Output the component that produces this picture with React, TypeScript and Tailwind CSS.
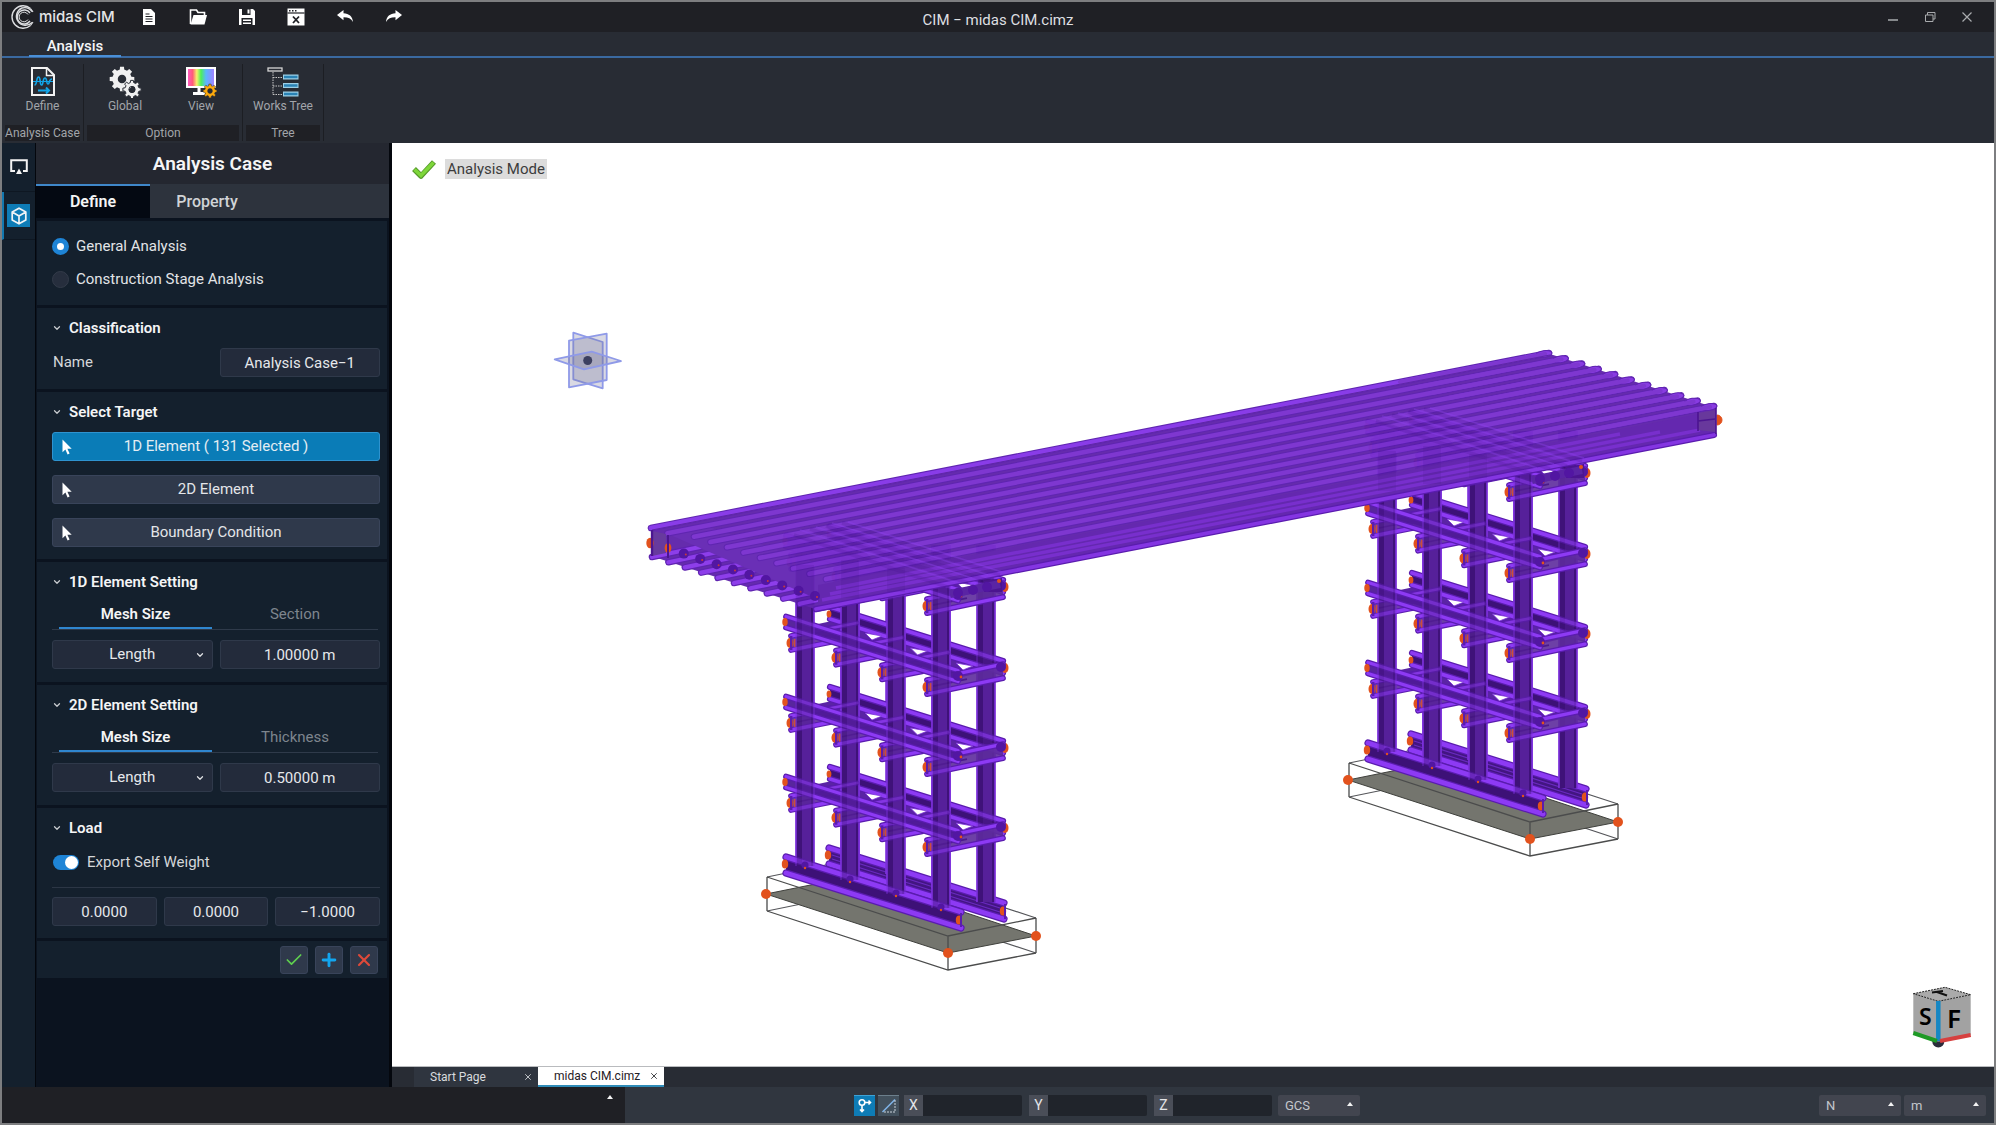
import React, { useState } from "react";
import { ChevronDown, Check, Plus, X } from "lucide-react";

type Pt = [number, number];
const pts = (list: Pt[]) => list.map((p) => p.join(",")).join(" ");

/* ---------- 3D model ---------- */

function Flange({ a, b, w = 5, bright = "#8d3af4" }: { a: Pt; b: Pt; w?: number; bright?: string }) {
  return (
    <g strokeLinecap="round">
      <line x1={a[0]} y1={a[1]} x2={b[0]} y2={b[1]} stroke="#5a1cae" strokeWidth={w + 1.2} />
      <line x1={a[0]} y1={a[1]} x2={b[0]} y2={b[1]} stroke={bright} strokeWidth={w - 1.2} />
    </g>
  );
}

function Beam({ a, b, h, web = "#431582", opacity = 1, w = 4.6 }: { a: Pt; b: Pt; h: number; web?: string; opacity?: number; w?: number }) {
  const t = h / 2;
  return (
    <g>
      <polygon
        points={pts([[a[0], a[1] - t], [b[0], b[1] - t], [b[0], b[1] + t], [a[0], a[1] + t]])}
        fill={web}
        opacity={opacity}
      />
      <Flange a={[a[0], a[1] + t]} b={[b[0], b[1] + t]} w={w} />
      <Flange a={[a[0], a[1] - t]} b={[b[0], b[1] - t]} w={w} />
    </g>
  );
}

function Column({ x, top, bottom, opacity = 1 }: { x: number; top: number; bottom: number; opacity?: number }) {
  return (
    <g opacity={opacity}>
      <rect x={x - 9} y={top} width={18} height={bottom - top} fill="#3f1279" />
      <rect x={x - 3} y={top} width={9} height={bottom - top} fill="#56209a" />
      <path d={`M${x - 9} ${top}V${bottom}M${x + 9} ${top}V${bottom}`} stroke="#7d31dc" strokeWidth={1.6} />
    </g>
  );
}

function Node({ x, y, r = 4 }: { x: number; y: number; r?: number }) {
  return <ellipse cx={x} cy={y} rx={r * 0.8} ry={r + 0.6} fill="#e2521d" />;
}

function BoltedEnd({ x, y, h }: { x: number; y: number; h: number }) {
  return (
    <g>
      <Node x={x - 1} y={y} r={4.4} />
      <rect x={x - 1} y={y - h / 2} width={2.4} height={h} fill="#5a1cae" />
      <rect x={x + 3} y={y - 4} width={1.6} height={8} fill="#e2521d" opacity={0.8} />
    </g>
  );
}

const FRONT_X = [805, 850, 896, 941];
const TIERS = [541, 622, 702, 782];

function Slab() {
  return (
    <g>
      <g stroke="#55565a" strokeWidth={1.2} fill="none">
        <path d="M767 877 855 859 1036 918M767 911 855 893 1036 953" />
      </g>
      <polygon points="766,894 855,876 1036,936 948,953" fill="#74756e" stroke="#3f403c" strokeWidth={1} />
      <g stroke="#4b4c4c" strokeWidth={1.3} fill="none">
        <path d="M767 877 948 936 1036 918M767 911 948 970 1036 953M767 877V911M948 936V970M1036 918V953" />
      </g>
      <circle cx={766} cy={894} r={5} fill="#e2521d" />
      <circle cx={948} cy={953} r={5} fill="#e2521d" />
      <circle cx={1036} cy={936} r={5} fill="#e2521d" />
    </g>
  );
}

function Tower() {
  return (
    <g>
      <Slab />
      <Beam a={[829, 856]} b={[1004, 911]} h={16} w={6} />
      <path d="M832 855 1000 908M832 859 1000 912" stroke="#6a2ac0" strokeWidth={1.2} />
      <Node x={828} y={855} />
      {FRONT_X.map((x, i) => (
        <Column key={x} x={x + 45} top={545} bottom={860 + i * 14} />
      ))}
      {TIERS.map((y) => (
        <g key={y}>
          <polygon
            points={pts([[846, y - 4], [1000, y + 46], [958, y + 56], [800, y + 6], [818, y + 2]])}
            fill="#5a24a4"
          />
          <Beam a={[830, y - 9]} b={[1003, y + 45]} h={12} web="#3d1177" w={5} />
          <Node x={829} y={y - 8} r={3} />
          <Node x={1005} y={y + 46} r={4.4} />
        </g>
      ))}
      <Column x={986} top={545} bottom={902} opacity={0.4} />
      {FRONT_X.map((x, i) => (
        <Column key={x} x={x} top={545} bottom={866 + i * 14} />
      ))}
      {TIERS.map((y) => (
        <g key={y}>
          {FRONT_X.map((x, i) => (
            <g key={x}>
              <Beam a={[x - 14, y + 21 + i * 14.7]} b={[x + (i === 3 ? 62 : 26), y + (i === 3 ? 5 : 13) + i * 14.7]} h={14} web="#5d2b9c" opacity={0.9} />
              <path d={`M${x - 8} ${y + 20 + i * 14.7}l34 -7`} stroke="#4c1a8c" strokeWidth={1.6} />
              <BoltedEnd x={x - 14} y={y + 21 + i * 14.7} h={14} />
            </g>
          ))}
          {FRONT_X.slice(0, 3).map((x, i) => (
            <Flange key={x} a={[x + 6, y + 10 + i * 14.7]} b={[x + 52, y + 1 + i * 14.7]} w={4} bright="#8435e2" />
          ))}
          <Beam a={[786, y]} b={[958, y + 54]} h={11} web="#4f1a98" opacity={0.95} />
          {[0, 1, 2].map((i) => (
            <path
              key={i}
              d={`M${865 + i * 45.5} ${y + 11 + i * 15}l17 3 -10 4z`}
              fill="#ffffff"
              stroke="#7d31dc"
              strokeWidth={0.8}
            />
          ))}
          <Node x={785} y={y} r={3.4} />
          <circle cx={958} cy={y + 54} r={5} fill="#5216a2" />
          <circle cx={961} cy={y + 55} r={1.4} fill="#e2521d" />
          <circle cx={1001} cy={y + 45} r={5} fill="#5216a2" />
        </g>
      ))}
      <Beam a={[786, 865]} b={[961, 920]} h={16} web="#3d1177" w={6} />
      <Node x={785} y={864} />
      <Node x={959} y={920} />
      <Node x={1003} y={911} />
      <path d="M961 913V927M1005 904V919" stroke="#5a1cae" strokeWidth={2} />
      {FRONT_X.map((x, i) => (
        <g key={x}>
          <Column x={x} top={545} bottom={866 + i * 14} opacity={0.45} />
          <circle cx={x} cy={865 + i * 14} r={3.5} fill="#5216a2" />
          <circle cx={x} cy={868 + i * 14} r={1.2} fill="#e2521d" />
        </g>
      ))}
    </g>
  );
}

function Deck() {
  const rows = Array.from({ length: 11 }, (_, i) => i);
  return (
    <g>
      <g opacity={0.97}>
        <polygon points="651,529 1550,354 1716,408 1716,434 815,609 651,556" fill="#6126ab" />
        {rows.map((i) => {
          const dx = i * 16.4;
          const dy = i * 5.2;
          return (
            <Flange key={i} a={[652 + dx, 557 + dy]} b={[700 + dx, 547 + dy]} w={5.4} bright="#8a38ea" />
          );
        })}
        <polygon points="668,534 700,524 850,574 815,598" fill="#6629b4" />
        {rows.map((i) => {
          const dx = i * 16.5;
          const dy = i * 5.3;
          const inset = i > 1 ? 10 : 0;
          const first = i === 0;
          return (
            <g key={i} strokeLinecap="round">
              <line x1={651 + dx + inset} y1={528 + dy - inset * 0.194} x2={1549 + dx} y2={353 + dy} stroke="#5a1fae" strokeWidth={6.6} />
              <line x1={651 + dx + inset} y1={528 + dy - inset * 0.194} x2={1549 + dx} y2={353 + dy} stroke={first ? "#8636e8" : "#7a31cf"} strokeWidth={4.6} />
              <ellipse cx={1544 + dx} cy={354 + dy} rx={8} ry={3.4} fill="#8636e2" stroke="#5a1cae" strokeWidth={1} transform={`rotate(-8 ${1544 + dx} ${354 + dy})`} />
              <line x1={1400 + dx} y1={382 + dy} x2={1545 + dx} y2={354 + dy} stroke="#7a31cf" strokeWidth={4.2} />
            </g>
          );
        })}
        <line x1={652} y1={530} x2={1550} y2={355} stroke="#5a20a4" strokeWidth={1} />
      </g>
      <polygon points="818,585 1714,411 1714,432 818,606" fill="#6428af" />
      <path d="M836 588 1620 434M830 594 1660 432M822 600 1700 430" stroke="#782fcd" strokeWidth={3.4} />
      <path d="M1717 415a5 5 0 0 1 0 10z" fill="#e2521d" stroke="#e2521d" />
      <Flange a={[816, 609]} b={[1714, 435]} w={5} bright="#8435e2" />
      <polygon points="1698,413 1715,410 1715,432 1698,430" fill="#68389c" />
      <path d="M1698 412V431M1716 408V434M1698 421 1715 419" stroke="#4c1590" strokeWidth={1.6} fill="none" />

      <polygon points="652,531 666,534 666,553 652,556" fill="#673a9e" />
      <Node x={650} y={543} r={4.6} />
      <path d="M652 530V556" stroke="#4c1590" strokeWidth={2.4} />
      <Node x={668} y={548} r={4.2} />
      <path d="M668 535V558" stroke="#4c1590" strokeWidth={2} />
      {rows.slice(2).map((i) => (
        <g key={i}>
          <circle cx={651 + i * 16.4} cy={543 + i * 5.3} r={5} fill="#5216a2" />
          <circle cx={653 + i * 16.4} cy={544 + i * 5.3} r={1} fill="#c83a3a" />
        </g>
      ))}
      {[0, 582].map((dx) => (
        <g key={dx} transform={`translate(${dx} ${dx ? -114 : 0})`}>
          <g stroke="#45148a" strokeWidth={3.6} opacity={0.2} fill="none">
            <path d="M794 535 950 588M810 529 968 583M826 526 985 580M842 523 1000 575" />
          </g>
          <g stroke="#8c42ee" strokeWidth={1.6} opacity={0.35} fill="none">
            <path d="M800 530 955 582M816 527 972 578M832 523 988 575M848 522 1002 572" />
          </g>
          <g fill="#45148a" opacity={0.14}>
            <rect x={796} y={565} width={18} height={40} />
            <rect x={841} y={560} width={18} height={38} />
            <rect x={887} y={568} width={18} height={24} />
          </g>
          <path d="M984 581 1002 578V592H984Z" fill="#4c1590" />
          <path d="M950 594 1000 584" stroke="#5a24a4" strokeWidth={8} />
          <circle cx={958} cy={593} r={5} fill="#5216a2" />
          <circle cx={973} cy={590} r={5} fill="#5216a2" />
          <circle cx={987} cy={587} r={5} fill="#5216a2" />
          <circle cx={999} cy={581} r={2} fill="#e2521d" />
        </g>
      ))}
    </g>
  );
}

function Gizmo() {
  return (
    <g fill="#6b6b92" fillOpacity={0.26} stroke="#8f9ae8" strokeWidth={1.8} strokeLinejoin="round">
      <polygon points="573.3,332.700 602.700,342 602.700,388.300 573.300,379.300" />
      <polygon points="569,340.700 606.700,333.700 606.700,380 569,387.300" />
      <polygon points="554.700,359.300 591.700,351.700 621,361 584,369.300" />
      <circle cx={587.7} cy={360.5} r={4.5} fill="#3d4060" fillOpacity={1} stroke="none" />
    </g>
  );
}

function ViewCube() {
  return (
    <svg viewBox="1910 984 66 66" className="h-full w-full" aria-label="View cube">
      <circle cx={1938.3} cy={1041.5} r={6} fill="#2b2d3c" />
      <polygon points="1913.300,993.700 1938.300,1001.300 1938.300,1041.700 1913.300,1033.300" fill="#a4a4a4" />
      <polygon points="1938.300,1001.300 1970.700,994.700 1970.700,1035 1938.300,1041.700" fill="#a2a2a2" />
      <polygon points="1913.300,993.700 1945,987.300 1970.700,994.700 1938.300,1001.300" fill="#aaaaaa" stroke="#222" strokeWidth={1} strokeDasharray="2 1" />
      <path d="M1938.300 1001V1041" stroke="#1587c4" strokeWidth={4.5} />
      <path d="M1913.300 1033 1937 1041" stroke="#1e9a26" strokeWidth={4} />
      <path d="M1940 1041 1970.700 1035" stroke="#d6403f" strokeWidth={4} />
      <text x={1919} y={1025} fontSize={23} fontWeight={600} fontFamily="Noto Sans, sans-serif">S</text>
      <text x={1947} y={1028} fontSize={26} fontWeight={600} fontFamily="Noto Sans, sans-serif">F</text>
      <path d="M1932 992.500 1943 991M1937 992 1947 995.500" stroke="#111" strokeWidth={2} />
    </svg>
  );
}

/* ---------- icons ---------- */

const gearPath = (cx: number, cy: number, r: number, teeth: number) => {
  const out: string[] = [];
  const step = (Math.PI * 2) / teeth;
  for (let i = 0; i < teeth; i++) {
    const a = i * step;
    const parts: Array<[number, number]> = [
      [-0.3, 0.77],
      [-0.2, 1],
      [0.2, 1],
      [0.3, 0.77],
    ];
    parts.forEach(([o, k]) => {
      const t = a + o * step;
      out.push(`${(cx + Math.cos(t) * r * k).toFixed(1)} ${(cy + Math.sin(t) * r * k).toFixed(1)}`);
    });
  }
  const h = r * 0.34;
  return `M${out.join("L")}Z M${cx - h} ${cy}a${h} ${h} 0 1 0 ${h * 2} 0a${h} ${h} 0 1 0 ${-h * 2} 0Z`;
};

const LogoIcon = () => (
  <svg viewBox="0 0 24 24" className="size-6" fill="none" stroke="#dcdde0">
    <path d="M20.500 3.500A11.200 11.200 0 1 0 20.500 20.500" strokeWidth="1.400" />
    <path d="M22 6.500A9.600 9.600 0 0 0 12 3 9 9 0 1 0 22 17.500" strokeWidth="1.400" />
    <path d="M20 8A7 7 0 1 0 20 16" strokeWidth="1.400" />
    <path d="M18 9.500A4.800 4.800 0 1 0 18 14.500" strokeWidth="1" />
    <path d="M20.500 3.500 23 7M20.500 20.500 23 17" strokeWidth="1.200" />
  </svg>
);

const FileIcon = () => (
  <svg viewBox="0 0 18 18" className="size-[18px]">
    <path d="M3 1h8l4 4v12H3z" fill="#fff" />
    <path d="M5.500 6h4M5.500 8.500h7M5.500 11h7M5.500 13.500h7" stroke="#1f2025" strokeWidth="1.200" />
  </svg>
);
const FolderIcon = () => (
  <svg viewBox="0 0 18 18" className="size-[18px]">
    <path d="M1.500 16V2h6l1.500 2.500h6.500V7" fill="none" stroke="#fff" strokeWidth="1.600" />
    <path d="M1.500 16.500 4.500 7H18l-2.500 9.500z" fill="#fff" />
  </svg>
);
const SaveIcon = () => (
  <svg viewBox="0 0 18 18" className="size-[18px]">
    <path d="M1 1h14l2 2v14H1z" fill="#fff" />
    <path d="M4 1h8.500v6H4zM3.500 10h11v7h-11z" fill="#1f2025" />
    <path d="M9.500 1.500h2v4h-2zM5 11.500h8v1.400H5zM5 14.500h8v1.400H5z" fill="#fff" />
  </svg>
);
const WindowCloseIcon = () => (
  <svg viewBox="0 0 18 18" className="size-[18px]">
    <path d="M.5.500h17v17H.5z" fill="#fff" />
    <path d="M.5 5h17" stroke="#1f2025" strokeWidth="1.200" />
    <path d="M2 2.700h1.500M5 2.700h1.500M8 2.700h1.500" stroke="#1f2025" strokeWidth="1.400" />
    <path d="M6 8.500l6 6.500M12 8.500 6 15" stroke="#1f2025" strokeWidth="1.800" />
  </svg>
);
const UndoIcon = ({ flip = false }: { flip?: boolean }) => (
  <svg viewBox="0 0 18 18" className={flip ? "size-[18px] -scale-x-100" : "size-[18px]"}>
    <path d="M1 7 7.500 2v3.300C13 5.500 16.500 8.500 17 14c-2-3.500-5-4.800-9.500-4.700v3z" fill="#fff" />
  </svg>
);

const DefineIcon = () => (
  <svg viewBox="0 0 30 32" className="h-8 w-[30px]" fill="none">
    <path d="M4 2h15l7 7v20H4z" stroke="#f3f3f3" strokeWidth="2" />
    <path d="M18.500 2v7.500H26" stroke="#f3f3f3" strokeWidth="1.500" />
    <path d="M6.500 19c3 0 1.500-8 4-8s1 8 3 8 1-7 3.500-7 1 6 3 6 .5-5 4-5" stroke="#12a5e8" strokeWidth="1.600" />
    <path d="M5 15.500h20" stroke="#12a5e8" strokeWidth="1" />
    <path d="M10 24.500h11M18 21.500l3 3-3 3" stroke="#12a5e8" strokeWidth="2" />
  </svg>
);
const GlobalIcon = () => (
  <svg viewBox="0 0 34 32" className="h-8 w-[34px]" fill="#f0f0f0" fillRule="evenodd">
    <path d={gearPath(14, 13, 12.5, 8)} />
    <path d={gearPath(24, 23.5, 9.2, 8)} stroke="#282c34" strokeWidth="1" />
  </svg>
);
const ViewIcon = () => (
  <svg viewBox="0 0 34 32" className="h-8 w-[34px]">
    <defs>
      <linearGradient id="spectrum">
        <stop offset="0" stopColor="#ff5bd0" />
        <stop offset=".2" stopColor="#ff5a78" />
        <stop offset=".35" stopColor="#f6f06a" />
        <stop offset=".5" stopColor="#4bf05a" />
        <stop offset=".68" stopColor="#5bb6ff" />
        <stop offset="1" stopColor="#a87bff" />
      </linearGradient>
    </defs>
    <rect x="3" y="2" width="28" height="19" fill="url(#spectrum)" stroke="#fff" strokeWidth="2" />
    <path d="M15 21v6M9 27.500h12" stroke="#fff" strokeWidth="3" />
    <path d={gearPath(26, 25, 7, 8)} fill="#ffab0c" fillRule="evenodd" stroke="#282c34" strokeWidth=".6" />
  </svg>
);
const TreeIcon = () => (
  <svg viewBox="0 0 34 32" className="h-8 w-[34px]" fill="none">
    <rect x="2" y="2" width="14" height="3" stroke="#d5d5d5" strokeWidth="1.300" />
    <path d="M7 6v23M7 11.500h10M7 20h10M7 28.500h10" stroke="#c5c5c5" strokeDasharray="1.500 1" />
    <path d="M17 11h15.500M17 19.500h15.500M17 28h15.500" stroke="#9ccfe6" strokeWidth="5" />
    <path d="M18 11h13.500M18 19.500h13.500M18 28h13.500" stroke="#2a83b5" strokeWidth="2.600" />
  </svg>
);
const CursorIcon = () => (
  <svg viewBox="0 0 10 16" className="h-4 w-[10px]">
    <path d="M.5.500v12.700L3.400 10.500l2.200 5 2-.9-2.200-4.800H9.700z" fill="#fff" />
  </svg>
);
const GreenCheck = () => (
  <svg viewBox="0 0 26 20" className="h-5 w-[26px]">
    <path d="M3 10l7 7L23 3" fill="none" stroke="#55982a" strokeWidth="5.500" strokeLinejoin="round" />
    <path d="M3.500 10.500l6.500 6L22.500 3.500" fill="none" stroke="#7ed63a" strokeWidth="3.400" />
  </svg>
);
const UpTriangle = () => (
  <svg viewBox="0 0 6 4" className="h-1 w-1.5">
    <path d="M0 4 3 0l3 4z" fill="#f3f3f3" />
  </svg>
);

/* ---------- panel controls ---------- */

const FIELD =
  "h-[29px] w-full min-w-0 rounded-[3px] border border-[#2f394a] bg-[#232b3b] text-center text-[15px] text-[#e6e8eb] outline-none";

function Section({ title, children }: { title: string; children: React.ReactNode }) {
  return (
    <section className="bg-[#14202d] pr-[7px] pb-3 pl-[15px]">
      <h2 className="flex h-10 items-center">
        <button type="button" className="flex items-center gap-[7px] text-[15px] font-semibold text-[#f4f5f6]">
          <ChevronDown className="size-2.5 text-[#c9ccd0]" strokeWidth={3} />
          {title}
        </button>
      </h2>
      {children}
    </section>
  );
}

function TargetButton({ label, active = false }: { label: string; active?: boolean }) {
  return (
    <button
      type="button"
      className={
        active
          ? "flex h-[29px] items-center rounded-[3px] border border-[#2f93cf] bg-[#0a7cb7] pr-[19px] pl-[9px] text-[15px] text-[#e3edf3]"
          : "flex h-[29px] items-center rounded-[3px] border border-[#39445a] bg-[#2f394b] pr-[19px] pl-[9px] text-[15px] text-[#e3e5e8]"
      }
    >
      <CursorIcon />
      <span className="flex-1">{label}</span>
    </button>
  );
}

function ElementSetting({ title, second, value }: { title: string; second: string; value: string }) {
  return (
    <Section title={title}>
      <div role="tablist" className="mr-0.5 flex h-7 border-b border-[#2f3a4a] pl-[7px] text-[15px]">
        <button type="button" role="tab" aria-selected="true" className="w-[153px] border-b-2 border-[#2f86cf] font-semibold text-[#f4f5f6]">
          Mesh Size
        </button>
        <button type="button" role="tab" aria-selected="false" className="flex-1 pb-0.5 text-[#7e858d]">
          {second}
        </button>
      </div>
      <div className="mt-2.5 grid grid-cols-2 gap-[7px] pb-px">
        <div className="relative">
          <select aria-label={title + " type"} className={FIELD + " appearance-none [text-align-last:center]"}>
            <option>Length</option>
          </select>
          <ChevronDown className="pointer-events-none absolute top-2.5 right-2 size-2.5 text-[#dfe1e4]" strokeWidth={3} />
        </div>
        <input aria-label={title + " value"} defaultValue={value} className={FIELD} />
      </div>
    </Section>
  );
}

function RadioRow({ label, checked, onPick }: { label: string; checked: boolean; onPick: () => void }) {
  return (
    <label className="flex h-[33px] items-center gap-[7px] text-[15px] text-[#e2e4e7]">
      <input
        type="radio"
        name="analysis-type"
        checked={checked}
        onChange={onPick}
        className="size-[17px] appearance-none rounded-full border border-[#333b49] bg-[#262e3d] checked:border-[5px] checked:border-[#1e84d6] checked:bg-white"
      />
      {label}
    </label>
  );
}

function AnalysisPanel() {
  const [kind, setKind] = useState(0);
  return (
    <aside className="flex w-[357px] shrink-0 flex-col border-r-[3px] border-l border-[#04070d] bg-[#0b131f]">
      <h1 className="flex h-[41px] items-center justify-center pt-0.5 bg-[#242730] text-[19px] font-semibold text-[#f4f5f6]">Analysis Case</h1>
      <div role="tablist" className="flex h-[34px] bg-[#2d333d] text-[16px] font-semibold">
        <button type="button" role="tab" aria-selected="true" className="w-[114px] border-t-2 border-[#3f87c9] bg-[#040912] text-[#f4f5f6]">
          Define
        </button>
        <button type="button" role="tab" aria-selected="false" className="w-[114px] pt-0.5 font-medium text-[#d0d3d6]">
          Property
        </button>
      </div>
      <div className="mt-[3px] mr-0.5 ml-px flex flex-col gap-[3px]">
        <section className="bg-[#14202d] pt-[9px] pr-[7px] pb-[9px] pl-[15px]">
          <RadioRow label="General Analysis" checked={kind === 0} onPick={() => setKind(0)} />
          <RadioRow label="Construction Stage Analysis" checked={kind === 1} onPick={() => setKind(1)} />
        </section>
        <Section title="Classification">
          <label className="grid grid-cols-2 items-center gap-[7px] text-[15px] text-[#d4d7da]">
            <span className="pl-px">Name</span>
            <input defaultValue="Analysis Case−1" className={FIELD} />
          </label>
        </Section>
        <Section title="Select Target">
          <div className="flex flex-col gap-3.5">
            <TargetButton label="1D Element ( 131 Selected )" active />
            <TargetButton label="2D Element" />
            <TargetButton label="Boundary Condition" />
          </div>
        </Section>
        <ElementSetting title="1D Element Setting" second="Section" value="1.00000 m" />
        <ElementSetting title="2D Element Setting" second="Thickness" value="0.50000 m" />
        <Section title="Load">
          <label className="flex h-7 items-center gap-2 pl-px text-[15px] text-[#d4d7da]">
            <input
              type="checkbox"
              role="switch"
              defaultChecked
              className="flex h-[15px] w-[26px] appearance-none items-center rounded-full bg-[#333b49] px-px before:size-[13px] before:rounded-full before:bg-white checked:justify-end checked:bg-[#1e84d6]"
            />
            Export Self Weight
          </label>
          <div className="mt-[11px] grid grid-cols-3 gap-[7px] border-t border-[#2c3645] pt-[9px]">
            <input aria-label="Self weight X" defaultValue="0.0000" className={FIELD} />
            <input aria-label="Self weight Y" defaultValue="0.0000" className={FIELD} />
            <input aria-label="Self weight Z" defaultValue="−1.0000" className={FIELD} />
          </div>
        </Section>
        <div className="flex h-[37px] items-center justify-end gap-[7px] bg-[#14202d] pr-[9px]">
          <button type="button" aria-label="Apply" className="grid size-7 place-items-center rounded-[3px] border border-[#39445a] bg-[#2f394b]">
            <Check className="size-5 text-[#5fd04f]" />
          </button>
          <button type="button" aria-label="Add" className="grid size-7 place-items-center rounded-[3px] border border-[#39445a] bg-[#2f394b]">
            <Plus className="size-5 text-[#13a5ee]" strokeWidth={3.5} />
          </button>
          <button type="button" aria-label="Cancel" className="grid size-7 place-items-center rounded-[3px] border border-[#39445a] bg-[#2f394b]">
            <X className="size-5 text-[#e0493a]" strokeWidth={2.5} />
          </button>
        </div>
      </div>
    </aside>
  );
}

/* ---------- chrome ---------- */

function TitleBar() {
  const tools: Array<[string, React.ReactNode]> = [
    ["New", <FileIcon />],
    ["Open", <FolderIcon />],
    ["Save", <SaveIcon />],
    ["Close file", <WindowCloseIcon />],
    ["Undo", <UndoIcon />],
    ["Redo", <UndoIcon flip />],
  ];
  return (
    <header className="grid h-[30px] shrink-0 grid-cols-[1fr_auto_1fr] items-center bg-[#1f2025]">
      <div className="flex items-center pl-2">
        <LogoIcon />
        <span className="ml-[5px] w-[83px] font-[Inter] text-[15px] font-medium text-[#e4e5e7]">midas CIM</span>
        <div className="ml-0.5 flex">
          {tools.map(([name, icon]) => (
            <button key={name} type="button" aria-label={name} className="grid w-[49px] place-items-center">
              {icon}
            </button>
          ))}
        </div>
      </div>
      <div className="pt-1.5 text-[15px] text-[#dedfe1]">CIM − midas CIM.cimz</div>
      <div className="flex justify-end pr-[9px] text-[#a9abae]">
        <button type="button" aria-label="Minimize" className="grid w-[37px] place-items-center">
          <svg viewBox="0 0 12 12" className="size-3"><path d="M1 9h10" stroke="currentColor" strokeWidth="1.500" /></svg>
        </button>
        <button type="button" aria-label="Restore" className="grid w-[37px] place-items-center">
          <svg viewBox="0 0 12 12" className="size-3" fill="none" stroke="currentColor"><path d="M1.500 4h7.500v6.500H1.500zM3.500 4V1.500h7.500V8H9" /></svg>
        </button>
        <button type="button" aria-label="Close" className="grid w-[37px] place-items-center">
          <svg viewBox="0 0 12 12" className="size-3" fill="none" stroke="currentColor" strokeWidth="1.200"><path d="M1.500 1.500l9 9M10.500 1.500l-9 9" /></svg>
        </button>
      </div>
    </header>
  );
}

function RibbonGroup({ label, width, children }: { label: string; width: string; children: React.ReactNode }) {
  return (
    <div className={"flex flex-col justify-between border-r border-[#1c1e23] px-[3px] " + width}>
      <div className="flex justify-around pt-0.5">{children}</div>
      <div className="h-4 bg-[#1f2025] text-center text-[12px] leading-4 whitespace-nowrap text-[#a2a5aa]">{label}</div>
    </div>
  );
}

function RibbonButton({ label, children }: { label: string; children: React.ReactNode }) {
  return (
    <button type="button" className="flex w-[74px] flex-col items-center text-[12px] leading-4 text-[#a2a5aa]">
      {children}
      {label}
    </button>
  );
}

function StatusSelect({ label, value, options }: { label: string; value: string; options: string[] }) {
  return (
    <div className="relative">
      <select
        aria-label={label}
        defaultValue={value}
        className="h-[21px] w-[82px] appearance-none rounded-[2px] bg-[#42454f] pl-[7px] text-[13px] text-[#c4c7cc] outline-none"
      >
        {options.map((o) => (
          <option key={o}>{o}</option>
        ))}
      </select>
      <span className="pointer-events-none absolute top-[9px] right-[7px] flex">
        <UpTriangle />
      </span>
    </div>
  );
}

export default function App() {
  return (
    <div className="flex h-screen flex-col border-2 border-[#7d7e80] bg-[#282c34] font-[Roboto,sans-serif]">
      <TitleBar />

      <nav className="flex h-[26px] shrink-0 border-b-2 border-[#3a69a0] pl-[27px]">
        <button type="button" className="h-[25px] w-[92px] border-b-2 border-[#4a8fd6] pt-1 text-[15px] leading-[18px] font-medium text-[#f4f5f6]">
          Analysis
        </button>
      </nav>

      <div className="flex h-[85px] shrink-0 pt-1.5 pb-0.5">
        <RibbonGroup label="Analysis Case" width="w-[82px]">
          <RibbonButton label="Define"><DefineIcon /></RibbonButton>
        </RibbonGroup>
        <RibbonGroup label="Option" width="w-[159px]">
          <RibbonButton label="Global"><GlobalIcon /></RibbonButton>
          <RibbonButton label="View"><ViewIcon /></RibbonButton>
        </RibbonGroup>
        <RibbonGroup label="Tree" width="w-[81px]">
          <RibbonButton label="Works Tree"><TreeIcon /></RibbonButton>
        </RibbonGroup>
      </div>

      <div className="flex min-h-0 flex-1">
        <div className="flex w-[33px] shrink-0 flex-col bg-[#14202d]">
          <button type="button" aria-label="Display" className="grid h-[49px] place-items-center border-b border-[#0e1722]">
            <svg viewBox="0 0 18 16" className="h-4 w-[18px]" fill="none">
              <path d="M5 12H1.200V1.200h15.600V12H13" stroke="#f3f3f3" strokeWidth="2" />
              <path d="M9 9.500 12 15H6z" fill="#f3f3f3" />
            </svg>
          </button>
          <button type="button" aria-label="Model" className="flex h-12 items-center border-b border-l-2 border-b-[#0e1722] border-l-[#1379b0] pl-[3px]">
            <span className="grid size-[23px] place-items-center bg-[#0e7cb6]">
              <svg viewBox="0 0 18 18" className="size-[18px]" fill="none" stroke="#f0f4f6" strokeWidth="1.700" strokeLinejoin="round">
                <path d="M9 1.200 15.800 5v8L9 16.800 2.200 13V5zM2.200 5 9 9l6.800-4M9 9v7.800" />
              </svg>
            </span>
          </button>
        </div>

        <AnalysisPanel />

        <main className="flex min-w-0 flex-1 flex-col">
          <div className="relative min-h-0 flex-1 bg-white">
            <svg viewBox="392 143 1602 923" className="h-full w-full" aria-label="Bridge model">
              <g transform="translate(582 -114)">
                <Tower />
              </g>
              <Tower />
              <Deck />
              <Gizmo />
            </svg>
            <div className="absolute top-4 left-[19px] flex items-center gap-2">
              <GreenCheck />
              <span className="bg-[#dcdcdc] px-0.5 text-[15px] leading-5 text-[#3c3c3c]">Analysis Mode</span>
            </div>
            <div className="absolute right-[18px] bottom-4 size-[66px]">
              <ViewCube />
            </div>
          </div>
          <div role="tablist" className="flex h-[21px] shrink-0 border-t border-[#b9bbbe] bg-[#282c34] pl-[22px] text-[12px]">
            <div className="flex w-[124px] items-center justify-between bg-[#2f353f] pr-[5px] pl-4 text-[#d9dbde]">
              <button type="button" role="tab" aria-selected="false">Start Page</button>
              <button type="button" aria-label="Close Start Page"><X className="size-2.5" /></button>
            </div>
            <div className="flex w-[126px] items-center justify-between border-b-2 border-[#2f8cb8] bg-white pr-[5px] pl-4 text-[#1f2025]">
              <button type="button" role="tab" aria-selected="true">midas CIM.cimz</button>
              <button type="button" aria-label="Close midas CIM.cimz"><X className="size-2.5" /></button>
            </div>
          </div>
        </main>
      </div>

      <footer className="flex h-9 shrink-0">
        <div className="flex w-[623px] justify-end bg-[#1f2025] pt-2 pr-3">
          <button type="button" aria-label="Expand log" className="flex h-1"><UpTriangle /></button>
        </div>
        <div className="flex flex-1 items-center bg-[#30363f] pr-2 pl-[229px]">
          <button type="button" aria-label="Snap" className="grid size-[21px] place-items-center border-t border-[#3fa3d6] bg-[#0e7cb6]">
            <svg viewBox="0 0 16 16" className="size-4" fill="none" stroke="#fff" strokeWidth="1.600">
              <circle cx="5" cy="4.500" r="2.800" />
              <path d="M8 4.500h6M11.500 2.500 13.500 4.500 11.500 6.500M5 7.500V14M3 11.500l2 2 2-2" />
            </svg>
          </button>
          <button type="button" aria-label="Angle" className="ml-[3px] grid size-[21px] place-items-center border-t border-[#6c7f8c] bg-[#43515d]">
            <svg viewBox="0 0 16 16" className="size-4" fill="none">
              <path d="M1.500 14 14 1.500" stroke="#7fb2e6" strokeWidth="1.600" />
              <path d="M14 2v12H2" stroke="#c9d2da" strokeDasharray="2 1" />
            </svg>
          </button>
          {["X", "Y", "Z"].map((axis) => (
            <label key={axis} className="ml-[5px] flex h-[21px] w-[120px] pr-0.5 text-[13px]">
              <span className="grid w-[19px] shrink-0 place-items-center bg-[#4a4e58] text-[14px] text-[#e3e5e8]">{axis}</span>
              <input className="w-full min-w-0 rounded-r-[2px] bg-[#20242b] px-1 text-[#e3e5e8] outline-none" />
            </label>
          ))}
          <div className="ml-1">
            <StatusSelect label="Coordinate system" value="GCS" options={["GCS", "UCS"]} />
          </div>
          <div className="ml-auto flex gap-[3px]">
            <StatusSelect label="Force unit" value="N" options={["N", "kN"]} />
            <StatusSelect label="Length unit" value="m" options={["m", "mm"]} />
          </div>
        </div>
      </footer>
    </div>
  );
}
